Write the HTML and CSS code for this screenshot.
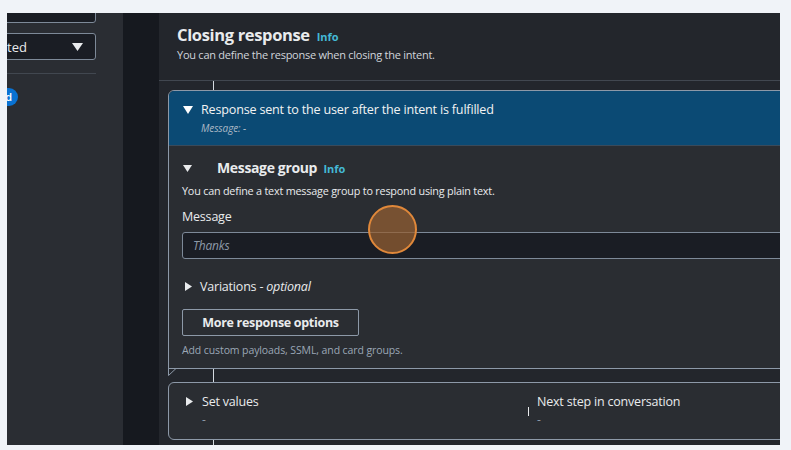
FILE: index.html
```html
<!DOCTYPE html>
<html lang="en">
<head>
<meta charset="utf-8">
<title>Closing response</title>
<link rel="stylesheet" href="styles.css">
</head>
<body>
<div class="shot">
  <aside class="side">
    <div class="field field-top"></div>
    <div class="select"><span class="select-text">ted</span><svg class="caret" width="11" height="8" viewBox="0 0 11 8"><path d="M0 0H11L5.5 8Z" fill="#e9ebed"/></svg></div>
    <div class="side-rule"></div>
    <span class="badge">d</span>
  </aside>
  <div class="gutter"></div>
  <main class="main">
    <header class="head">
      <h2 class="title">Closing response <a class="info">Info</a></h2>
      <p class="sub">You can define the response when closing the intent.</p>
    </header>
    <div class="flow">
      <div class="link link-a"></div>
      <section class="card card-resp">
        <div class="card-head">
          <svg class="tri-down" width="10" height="8" viewBox="0 0 10 8"><path d="M0 0H10L5 8Z" fill="#ffffff"/></svg>
          <div class="head-text">
            <div class="card-title">Response sent to the user after the intent is fulfilled</div>
            <div class="card-meta">Message: -</div>
          </div>
        </div>
        <div class="card-body">
          <div class="group-row">
            <svg class="tri-small" width="9" height="7" viewBox="0 0 9 7"><path d="M0 0H9L4.5 7Z" fill="#e9ebed"/></svg>
            <h3 class="group-title">Message group <a class="info">Info</a></h3>
          </div>
          <p class="desc">You can define a text message group to respond using plain text.</p>
          <label class="label">Message</label>
          <div class="input"><span class="placeholder">Thanks</span></div>
          <div class="variations">
            <svg class="tri-right" width="7" height="9" viewBox="0 0 7 9"><path d="M0 0V9L7 4.5Z" fill="#e9ebed"/></svg>
            <span>Variations - <em>optional</em></span>
          </div>
          <button class="btn">More response options</button>
          <p class="hint">Add custom payloads, SSML, and card groups.</p>
        </div>
        <svg class="tail" width="12" height="8" viewBox="0 0 12 8"><path d="M0.5 0V7.5L8 0.5" fill="none" stroke="#8d99a8" stroke-width="1"/></svg>
      </section>
      <div class="link link-b"></div>
      <section class="card card-set">
        <div class="set-col">
          <div class="set-title"><svg class="tri-right" width="7" height="9" viewBox="0 0 7 9"><path d="M0 0V9L7 4.5Z" fill="#e9ebed"/></svg><span>Set values</span></div>
          <div class="set-val set-val-a">-</div>
        </div>
        <div class="set-sep"></div>
        <div class="set-col set-col-b">
          <div class="set-title">Next step in conversation</div>
          <div class="set-val">-</div>
        </div>
      </section>
      <div class="link link-c"></div>
    </div>
  </main>
</div>
<div class="cursor"></div>
</body>
</html>
```
FILE: styles.css
```css
* { box-sizing: border-box; }
html, body { margin: 0; padding: 0; }
body {
  background: #f0f3f8;
  width: 791px;
  height: 450px;
  overflow: hidden;
  position: relative;
  font-family: "Open Sans", "Noto Sans", sans-serif;
  color: #d1d5db;
}
.shot {
  margin: 13px 0 0 7px;
  width: 773px;
  height: 432px;
  display: flex;
  overflow: hidden;
  background: #23262c;
}
.side {
  width: 116px;
  flex: none;
  background: #2a2d33;
  padding-right: 27px;
  display: flex;
  flex-direction: column;
  align-items: flex-start;
}
.field {
  width: 109px;
  margin-left: -20px;
  border: 1px solid #7d8998;
  border-radius: 3px;
  background: #1a1d24;
}
.field-top { height: 22px; margin-top: -12px; }
.select {
  width: 109px;
  margin-left: -20px;
  margin-top: 10px;
  height: 27px;
  border: 1px solid #7d8998;
  border-radius: 3px;
  background: #1a1d24;
  display: flex;
  align-items: center;
  justify-content: space-between;
  padding: 0 12px 0 0;
}
.select-text {
  font-size: 13px;
  color: #e9ebed;
  margin-left: 19px;
}
.caret { display: block; }
.side-rule {
  width: 89px;
  height: 1px;
  background: #414750;
  margin-top: 13px;
}
.badge {
  margin-top: 14px;
  margin-left: -14px;
  height: 18px;
  width: 25px;
  border-radius: 9px;
  background: #0972d3;
  color: #ffffff;
  font-size: 11px;
  font-weight: 600;
  line-height: 18px;
  text-align: right;
  padding-right: 6px;
}
.gutter {
  width: 36px;
  flex: none;
  background: #16191f;
}
.main {
  flex: 1;
  min-width: 0;
  overflow: hidden;
  display: flex;
  flex-direction: column;
}
.head {
  padding: 11px 18px 0;
  height: 68px;
  border-bottom: 1px solid #414750;
  flex: none;
}
.title {
  margin: 0;
  font-size: 16.5px;
  line-height: 22px;
  font-weight: 700;
  color: #e9ebed;
  letter-spacing: -0.35px;
}
.info {
  font-size: 11px;
  font-weight: 700;
  color: #44b9d6;
  margin-left: 3px;
  letter-spacing: 0;
}
.sub {
  margin: -1px 0 0;
  font-size: 11px;
  line-height: 16px;
  color: #d1d5db;
  letter-spacing: -0.25px;
}
.flow {
  padding-left: 9px;
  margin-right: -20px;
  display: flex;
  flex-direction: column;
}
.link {
  width: 1px;
  margin-left: 45px;
  background: #d5dbe1;
  flex: none;
}
.link-a { height: 9px; }
.link-b { height: 13px; }
.link-c { height: 8px; }
.card {
  border: 1px solid #8d99a8;
  border-radius: 6px;
  background: #2a2d32;
  position: relative;
}
.card-resp {
  border-bottom-left-radius: 0;
}
.card-head {
  background: #0b4a74;
  border-top-left-radius: 5px;
  height: 55px;
  display: flex;
  align-items: flex-start;
  padding: 15px 0 0 14px;
  border-bottom: 1px solid #3a4a5a;
}
.tri-down { flex: none; }
.head-text { margin-left: 8px; margin-top: -5px; }
.card-title {
  font-size: 12.6px;
  line-height: 17px;
  color: #f2f3f3;
  letter-spacing: -0.2px;
}
.card-meta {
  margin-top: 3px;
  font-size: 10px;
  line-height: 15px;
  font-style: italic;
  color: #aab7c4;
  letter-spacing: -0.1px;
}
.card-body {
  height: 222px;
  padding: 11px 0 0 13px;
}
.group-row {
  display: flex;
  align-items: center;
  height: 20px;
}
.tri-small { margin-left: 1px; margin-top: 3px; }
.group-title {
  margin: 0 0 0 25px;
  font-size: 14px;
  font-weight: 700;
  color: #e9ebed;
  letter-spacing: -0.35px;
}
.desc {
  margin: 6px 0 0;
  font-size: 10.8px;
  line-height: 15px;
  color: #e9ebed;
  letter-spacing: -0.2px;
}
.label {
  display: block;
  margin-top: 10px;
  font-size: 12.5px;
  line-height: 18px;
  color: #e9ebed;
  letter-spacing: -0.2px;
}
.input {
  margin-top: 6px;
  height: 27px;
  border: 1px solid #7d8998;
  border-radius: 3px 0 0 3px;
  background: #1a1d24;
  padding-left: 10px;
  display: flex;
  align-items: center;
}
.placeholder {
  font-size: 12px;
  font-style: italic;
  color: #8d99a8;
  letter-spacing: -0.2px;
}
.variations {
  display: flex;
  align-items: center;
  margin-top: 19px;
  height: 17px;
  font-size: 12.5px;
  color: #e9ebed;
  letter-spacing: -0.2px;
}
.variations .tri-right { margin: 0 8px 0 3px; }
.btn {
  display: block;
  margin-top: 14px;
  width: 177px;
  height: 27px;
  border: 1px solid #8d99a8;
  border-radius: 2px;
  background: transparent;
  color: #e9ebed;
  font-family: inherit;
  font-size: 12.5px;
  font-weight: 700;
  letter-spacing: -0.3px;
  padding: 0;
}
.hint {
  margin: 7px 0 0;
  font-size: 10.5px;
  line-height: 15px;
  color: #9ba7b6;
  letter-spacing: -0.1px;
}
.tail {
  position: absolute;
  left: -1px;
  bottom: -8px;
}
.card-set {
  height: 58px;
  display: flex;
  align-items: flex-start;
  padding-top: 10px;
}
.set-col { width: 358px; }
.set-title {
  display: flex;
  align-items: center;
  font-size: 12.5px;
  line-height: 17px;
  color: #e9ebed;
  letter-spacing: -0.2px;
}
.set-title .tri-right { margin: 0 9px 0 17px; }
.set-val {
  font-size: 12px;
  line-height: 20px;
  color: #8d99a8;
}
.set-val-a { padding-left: 33px; }
.set-sep {
  width: 1px;
  height: 9px;
  background: #e9ebed;
  margin-top: 14px;
  margin-left: 1px;
}
.set-col-b { padding-left: 8px; width: 250px; }
.cursor {
  position: absolute;
  left: 368px;
  top: 205px;
  width: 49px;
  height: 49px;
  border-radius: 50%;
  border: 2px solid #e0883a;
  background: rgba(150, 95, 50, 0.72);
}
```
